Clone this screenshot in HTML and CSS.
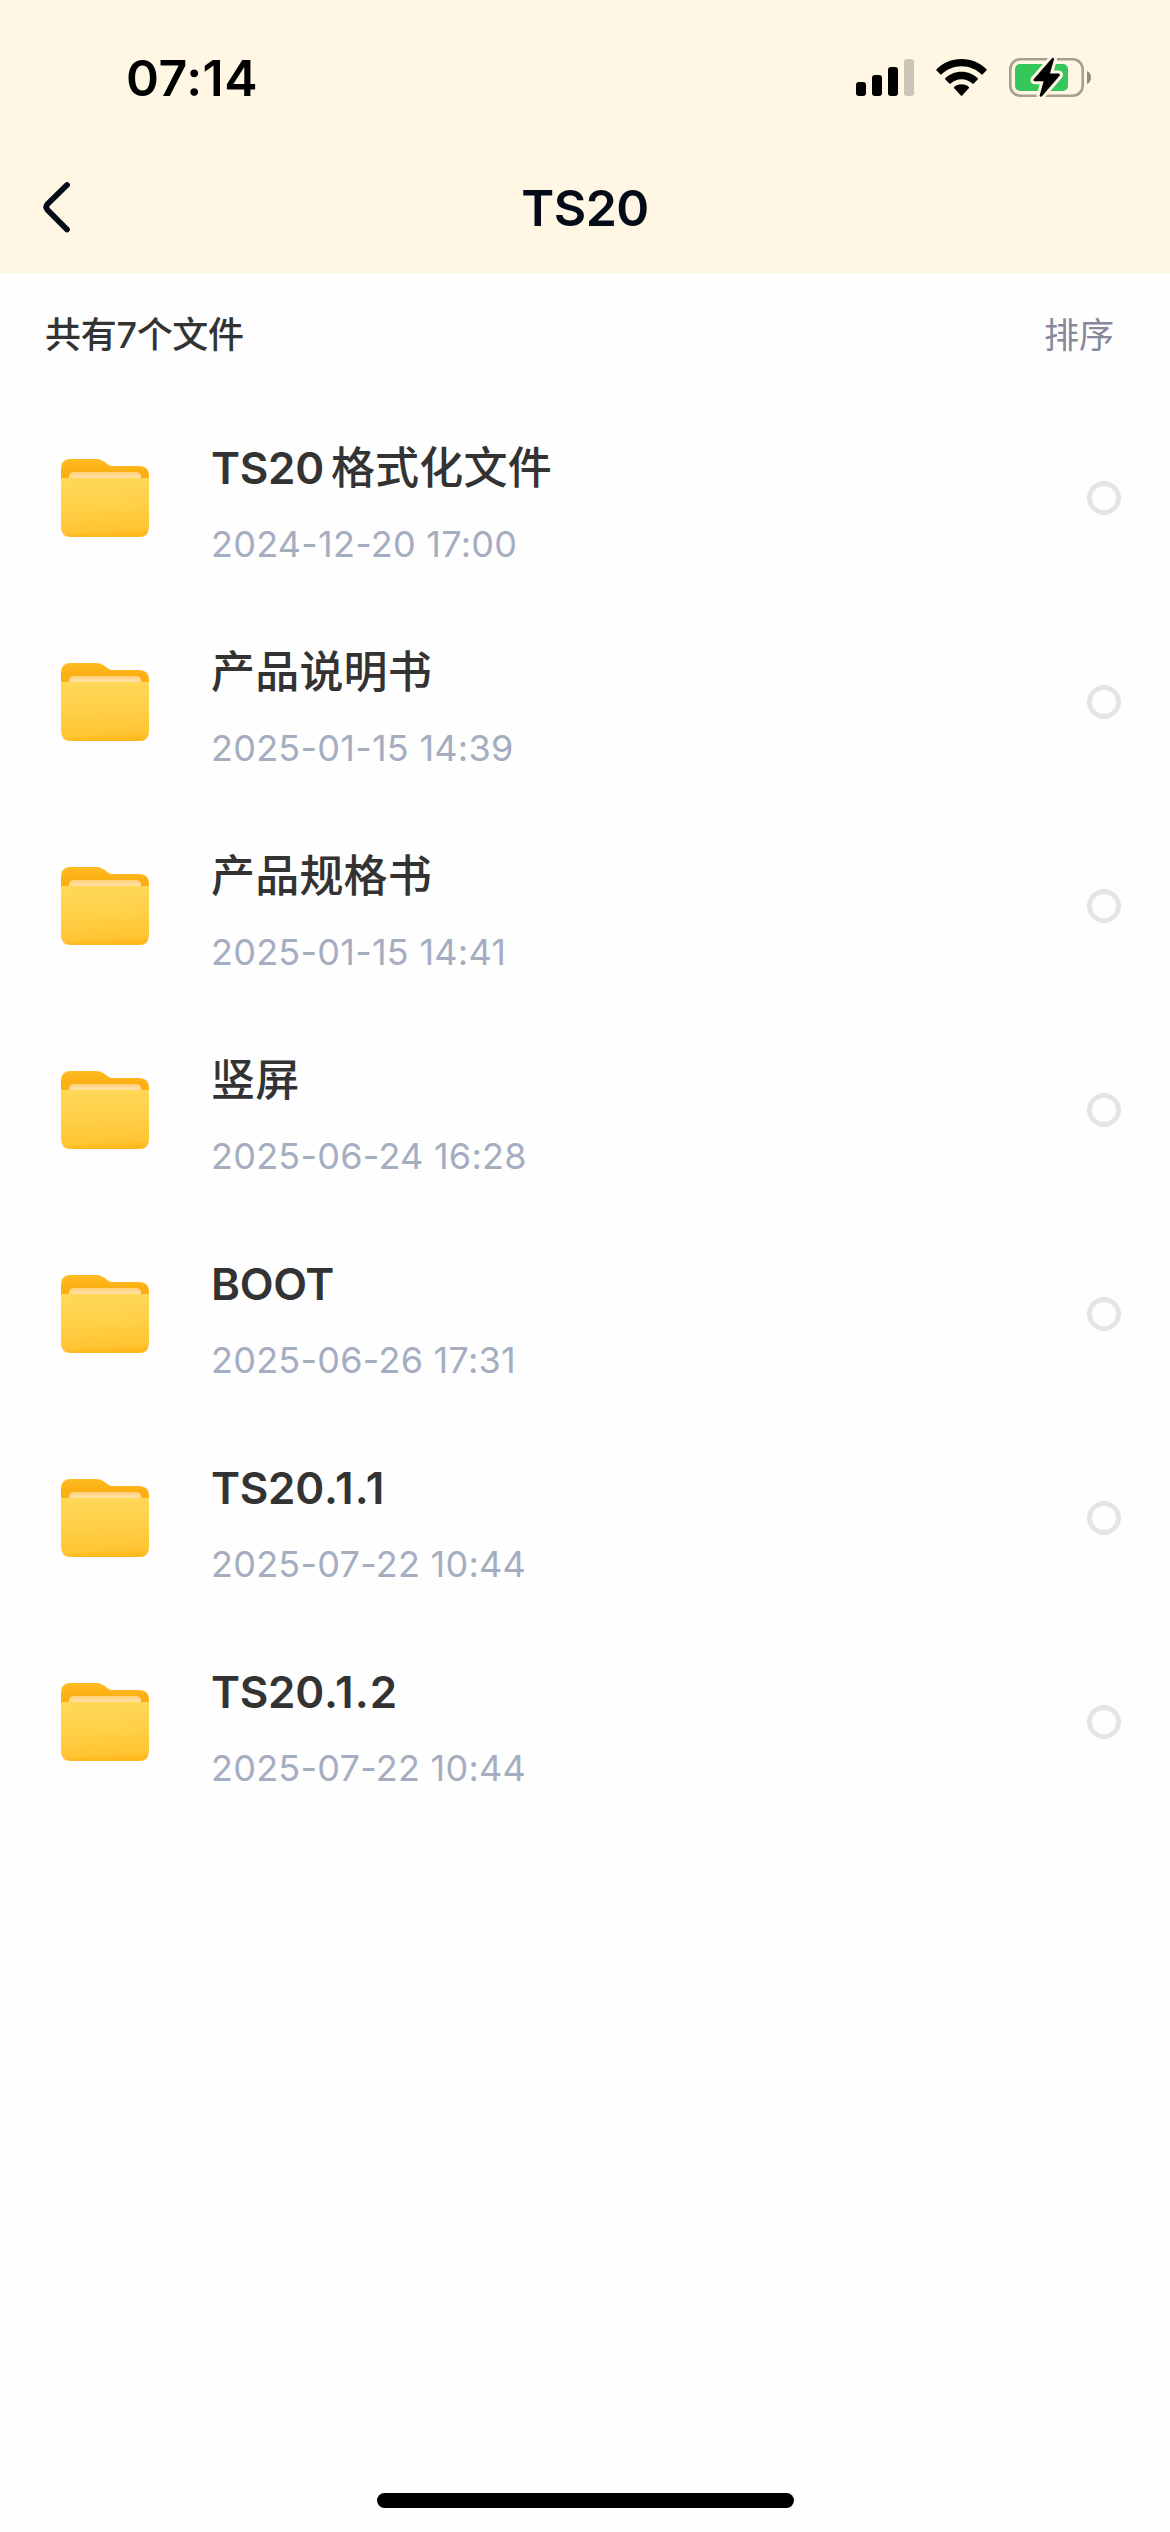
FILE: index.html
```html
<!DOCTYPE html>
<html lang="zh-CN">
<head>
    <meta charset="UTF-8">
    <meta name="viewport" content="width=device-width, initial-scale=1.0">
    <title>TS20</title>
    <link rel="stylesheet" href="styles.css">
</head>
<body>
    <!-- shared icons -->
    <svg class="defs" width="0" height="0">
        <defs>
            <linearGradient id="folder-back" x1="0" y1="0" x2="0" y2="1">
                <stop offset="0" stop-color="#fdbc22"/>
                <stop offset="0.3" stop-color="#fcb013"/>
            </linearGradient>
            <linearGradient id="folder-paper" x1="0" y1="0" x2="0" y2="1">
                <stop offset="0" stop-color="#ffd078"/>
                <stop offset="1" stop-color="#ffe9bd"/>
            </linearGradient>
            <linearGradient id="folder-front" x1="0" y1="0" x2="0.08" y2="1">
                <stop offset="0" stop-color="#ffd95a"/>
                <stop offset="0.5" stop-color="#ffd048"/>
                <stop offset="0.92" stop-color="#ffc532"/>
                <stop offset="1" stop-color="#fdb91f"/>
            </linearGradient>
        </defs>
        <symbol id="folder" viewBox="0 0 90 80">
            <path d="M1 40V10.500Q1 1 10.500 1H37Q41 1 44 3.500L48 6.500Q50 8 53 8H79Q89 8 89 18V40Z" fill="url(#folder-back)"/>
            <path d="M9 22V19Q9 14 14 14H76Q81 14 81 19V22Z" fill="url(#folder-paper)"/>
            <path d="M1 20H89V69Q89 79 79 79H11Q1 79 1 69Z" fill="url(#folder-front)"/>
        </symbol>
    </svg>

    <div class="page">
        <header class="header">
            <div class="status-bar">
                <div class="time">07:14</div>
                <div class="status-icons">
                    <svg width="58" height="38" viewBox="0 0 58 38">
                        <rect x="0" y="23" width="10" height="14" rx="3"/>
                        <rect x="16" y="16" width="10" height="21" rx="3"/>
                        <rect x="32" y="8" width="10" height="29" rx="3"/>
                        <rect x="48" y="0" width="10" height="37" rx="3" opacity="0.2"/>
                    </svg>
                    <svg width="51" height="38" viewBox="0 0 51 38">
                        <path d="M25.500 0C35.500 0 44.300 3.800 50.500 10.300Q51 11 50.400 11.600L46.700 15.300Q46 16 45.300 15.300C40.300 10.300 33.300 7.300 25.500 7.300S10.700 10.300 5.700 15.300Q5 16 4.300 15.300L.6 11.600Q0 11 .5 10.300C6.700 3.800 15.500 0 25.500 0Z"/>
                        <path d="M25.500 12.700C32 12.700 37.500 15.200 41.700 19.200Q42.300 19.900 41.700 20.500L37.700 24.500Q37 25.100 36.300 24.500C33.500 21.800 29.800 20.200 25.500 20.200S17.500 21.800 14.700 24.500Q14 25.100 13.300 24.500L9.300 20.500Q8.700 19.900 9.300 19.200C13.500 15.200 19 12.700 25.500 12.700Z"/>
                        <path d="M25.500 25.300C28.500 25.300 31 26.300 32.800 27.900Q33.500 28.600 32.800 29.300L26.200 36.400Q25.500 37.100 24.800 36.400L18.200 29.300Q17.500 28.600 18.200 27.900C20 26.300 22.500 25.300 25.500 25.300Z"/>
                    </svg>
                    <svg width="83" height="42" viewBox="0 0 83 42">
                        <rect x="1.300" y="2.300" width="72.400" height="36.400" rx="10" fill="none" stroke="#a79f8f" stroke-width="2.600"/>
                        <path d="M78 14C83.300 16 83.300 25 78 27Z" fill="#918a7d"/>
                        <rect x="6" y="7" width="53" height="27" rx="5" fill="#34c759"/>
                        <path d="M43 1.200L24.600 22.200Q23.900 24 25.600 24.200H34.600L30.600 38.400Q31 40.500 33 39.300L50.800 18.500Q51.400 16.700 49.700 16.500H41L45 2.200Q44.500 0 43 1.200Z" stroke="#fff7e4" stroke-width="6" stroke-linejoin="round" paint-order="stroke"/>
                    </svg>
                </div>
            </div>
            <div class="nav-bar">
                <svg class="back" width="28" height="52" viewBox="0 0 28 52">
                    <path d="M24 4L4.600 23Q1.800 26 4.600 29L24 48.500" fill="none" stroke="#030a18" stroke-width="5.800" stroke-linecap="round"/>
                </svg>
                <h1>TS20</h1>
            </div>
        </header>

        <div class="toolbar">
            <span class="count">共有7个文件</span>
            <span class="sort">排序</span>
        </div>

        <ul class="file-list">
            <li class="file">
                <svg class="folder"><use href="#folder"/></svg>
                <div class="info">
                    <div class="name">TS20<span class="cjk gap">格式化文件</span></div>
                    <div class="date">2024-12-20 17:00</div>
                </div>
                <span class="radio"></span>
            </li>
            <li class="file">
                <svg class="folder"><use href="#folder"/></svg>
                <div class="info">
                    <div class="name"><span class="cjk">产品说明书</span></div>
                    <div class="date">2025-01-15 14:39</div>
                </div>
                <span class="radio"></span>
            </li>
            <li class="file">
                <svg class="folder"><use href="#folder"/></svg>
                <div class="info">
                    <div class="name"><span class="cjk">产品规格书</span></div>
                    <div class="date">2025-01-15 14:41</div>
                </div>
                <span class="radio"></span>
            </li>
            <li class="file">
                <svg class="folder"><use href="#folder"/></svg>
                <div class="info">
                    <div class="name"><span class="cjk">竖屏</span></div>
                    <div class="date">2025-06-24 16:28</div>
                </div>
                <span class="radio"></span>
            </li>
            <li class="file">
                <svg class="folder"><use href="#folder"/></svg>
                <div class="info">
                    <div class="name">BOOT</div>
                    <div class="date">2025-06-26 17:31</div>
                </div>
                <span class="radio"></span>
            </li>
            <li class="file">
                <svg class="folder"><use href="#folder"/></svg>
                <div class="info">
                    <div class="name">TS20<span class="version">.1.1</span></div>
                    <div class="date">2025-07-22 10:44</div>
                </div>
                <span class="radio"></span>
            </li>
            <li class="file">
                <svg class="folder"><use href="#folder"/></svg>
                <div class="info">
                    <div class="name">TS20<span class="version">.1.2</span></div>
                    <div class="date">2025-07-22 10:44</div>
                </div>
                <span class="radio"></span>
            </li>
        </ul>

        <div class="home-indicator"></div>
    </div>
</body>
</html>
```
FILE: styles.css
```css
* { box-sizing: border-box; }
body {
    margin: 0;
    background: #fefefe;
    font-family: Inter, "Noto Sans CJK SC", sans-serif;
    color: #333;
}
svg { display: block; }
.defs { position: absolute; }
.page {
    display: flex;
    flex-direction: column;
    width: 1170px;
    height: 2532px;
}

.header { height: 273px; background: #fff7e4; }
.status-bar {
    display: flex;
    justify-content: space-between;
    height: 141px;
    padding: 48px 78px 0 126px;
}
.time {
    font-size: 50px;
    line-height: 60px;
    font-weight: 600;
    letter-spacing: 0.5px;
    color: #000;
}
.status-icons { display: flex; align-items: flex-start; padding-top: 9px; }
.status-icons svg:nth-child(1) { margin: 2px 22px 0 0; }
.status-icons svg:nth-child(2) { margin: 2px 22px 0 0; }

.nav-bar {
    display: grid;
    grid-template-columns: 200px 1fr 200px;
    align-items: center;
    height: 132px;
}
.back { margin: 0 0 1px 43px; }
.nav-bar h1 {
    margin: 1px 0 0;
    text-align: center;
    font-size: 50px;
    line-height: 60px;
    font-weight: 600;
    letter-spacing: -0.5px;
    color: #030a18;
}

.toolbar {
    display: flex;
    justify-content: space-between;
    align-items: center;
    height: 123px;
    padding: 0 56px 5px 45px;
}
.count {
    font-size: 36px;
    font-weight: 500;
    letter-spacing: -0.3px;
}
.sort { font-size: 35px; color: #85899b; }

.file-list { flex: 1; margin: 0; padding: 0; list-style: none; }
.file {
    display: flex;
    align-items: center;
    height: 204px;
    padding: 0 49px 0 60px;
}
.folder { width: 90px; height: 80px; }
.info { flex: 1; margin-left: 61px; padding-top: 4px; }
.name {
    font-size: 44px;
    line-height: 60px;
    height: 60px;
    font-weight: 600;
    letter-spacing: -0.3px;
}
.cjk { font-weight: 500; letter-spacing: 0.2px; }
.gap { margin-left: 7px; }
.version { letter-spacing: 1px; }
.date {
    margin-top: 28px;
    font-size: 36px;
    line-height: 36px;
    letter-spacing: 0.25px;
    color: #a5adc0;
}
.radio {
    width: 34px;
    height: 34px;
    border: 5px solid #e4e5e9;
    border-radius: 50%;
}

.home-indicator {
    width: 417px;
    height: 15px;
    margin: 0 auto 24px;
    border-radius: 8px;
    background: #000;
}
```
